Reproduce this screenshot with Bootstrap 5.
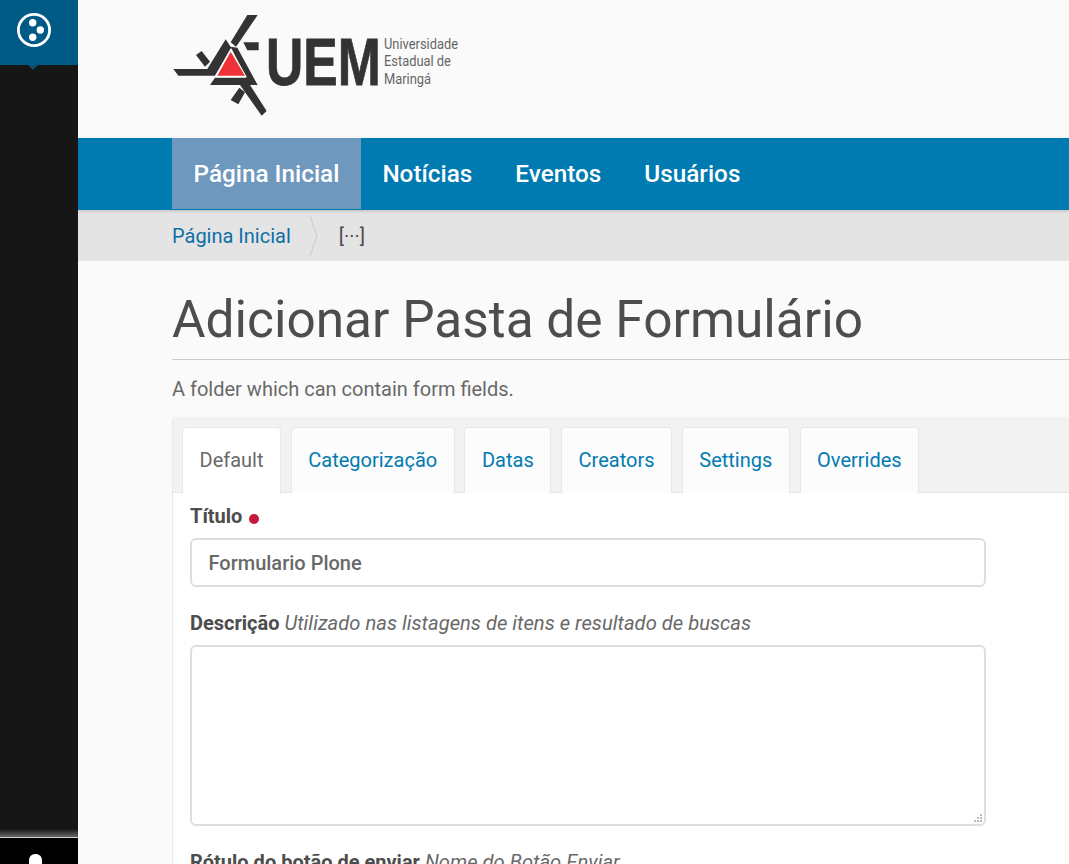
<!DOCTYPE html>
<html lang="pt-BR">
<head>
    <meta charset="UTF-8">
    <title>Adicionar Pasta de Formulário</title>
    <link href="https://cdn.jsdelivr.net/npm/bootstrap@5.3.3/dist/css/bootstrap.min.css" rel="stylesheet">
    <style>
        html, body { height: 100%; overflow: hidden; }
        body { font-family: Roboto, "Liberation Sans", sans-serif; background: #fafafa; color: #4d4d4d; }
        .app-shell { height: 864px; overflow: hidden; }
        .side-toolbar { width: 78px; flex: 0 0 78px; background: #161616; }
        .side-logo { height: 65px; background: #005a86; position: relative; padding: 13px 0 0 17px; }
        .side-logo::after { content: ""; position: absolute; left: 28px; top: 65px; border: 5px solid transparent; border-top: 5px solid #0b4f72; border-bottom: 0; }
        .side-fill { background: linear-gradient(to bottom, #161616 calc(100% - 8px), #666 100%); }
        .side-user { height: 27px; background: #000; border-top: 1px solid #cfcfcf; overflow: hidden; }
        .side-user span { display: block; width: 13px; height: 20px; margin: 16px 0 0 29px; background: #fff; border-radius: 6px; }
        .main-col { min-width: 0; overflow: hidden; }
        .site-head { height: 138px; padding: 13px 0 0 94px; }
        .site-nav { height: 72px; background: #007bb1; padding: 0 0 1px 94px; box-shadow: 0 1px 3px rgba(0, 0, 0, .17); position: relative; }
        .site-nav .nav-link { color: #fff; font-size: 24.3px; font-weight: 500; line-height: 72px; height: 71px; padding: 0 21.5px; }
        .site-nav .nav-link.active { background: #6f98bf; }
        .crumbs { height: 51px; background: #e5e4e5; padding-left: 94px; font-size: 20px; }
        .crumbs a { color: #0f6fa5; text-decoration: none; }
        .crumb-sep { margin: 0 20px 0 18px; }
        .crumb-rest { color: #4d4d4d; }
        .page-body { padding: 27px 0 0 94px; width: 991px; }
        .page-title { font-size: 51.4px; font-weight: 400; line-height: 63px; padding-bottom: 8px; margin: 0; border-bottom: 1px solid #ccc; color: #4d4d4d; }
        .page-desc { font-size: 20px; line-height: 24px; margin: 17px 0 16px; color: #696969; }
        .form-box { background: #fff; border-left: 1px solid #e9e9e9; border-radius: 4px 0 0 0; }
        .tab-strip { background: #f2f2f2; padding: 10px 0 0 9px; gap: 9.8px; border-bottom: 1px solid #e5e5e5; height: 76px; }
        .tab-strip .nav-link { height: 66px; padding: 0 16.5px; line-height: 65px; font-size: 20px; color: #007bb1; background: #fcfcfc; border: 1px solid #e8e8e8; border-bottom: 0; border-radius: 4px 4px 0 0; }
        .tab-strip .nav-link.active { color: #696969; background: #fff; height: 67px; }
        .form-pane { padding: 10px 0 0 17px; width: 796px; box-sizing: content-box; }
        .field-label { font-size: 20px; font-weight: 700; color: #4d4d4d; margin: 0; line-height: 27px; }
        .field-hint { font-size: 20.2px; font-weight: 400; font-style: italic; color: #696969; }
        .req-dot { display: inline-block; width: 10px; height: 10px; border-radius: 50%; background: #c4183c; margin-left: 2px; vertical-align: -1px; }
        .title-input { height: 49px; margin: 8px 0 23px; padding: 0 16.5px; font-size: 20px; font-weight: 500; color: #696969; border: 2px solid #dedede; border-radius: 6px; width: 796px; }
        .desc-input { height: 181px; margin: 8px 0 23px; border: 2px solid #dedede; border-radius: 6px; width: 796px; display: block; }
        .desc-input::-webkit-resizer { background: url("data:image/svg+xml,%3Csvg xmlns='http://www.w3.org/2000/svg' width='9' height='9' fill='%23bbb'%3E%3Crect x='7' y='0' width='2' height='2'/%3E%3Crect x='4' y='3' width='2' height='2'/%3E%3Crect x='7' y='3' width='2' height='2'/%3E%3Crect x='1' y='6' width='2' height='2'/%3E%3Crect x='4' y='6' width='2' height='2'/%3E%3Crect x='7' y='6' width='2' height='2'/%3E%3C/svg%3E") no-repeat right 2px bottom 1px; }
        .logo-word { font-family: "Liberation Sans", sans-serif; font-weight: 700; font-size: 67px; fill: #333; stroke: #333; stroke-width: .8px; }
        .logo-small { font-family: Roboto, sans-serif; font-size: 14px; fill: #666; }
    </style>
</head>
<body>
<div class="app-shell d-flex">

    <!-- Toolbar -->
    <div class="side-toolbar d-flex flex-column">
        <div class="side-logo">
            <svg width="34" height="34" viewBox="0 0 34 34">
                <circle cx="17" cy="17" r="15.6" fill="none" stroke="#fff" stroke-width="2.8"/>
                <circle cx="15.7" cy="9.7" r="3.7" fill="#fff"/>
                <circle cx="23.3" cy="17" r="3.7" fill="#fff"/>
                <circle cx="15.7" cy="24.3" r="3.7" fill="#fff"/>
            </svg>
        </div>
        <div class="side-fill flex-grow-1"></div>
        <div class="side-user"><span></span></div>
    </div>

    <div class="main-col flex-grow-1">
        <!-- Logo -->
        <div class="site-head">
            <svg width="290" height="108" viewBox="0 0 290 108">
                <g transform="translate(-12 -8) scale(.3333)" fill="#333">
                    <polygon points="262,30 293,30 240,108 228,125 212,112"/>
                    <polygon points="197,103 215,130 165,212 55,212 40,192 142,192"/>
                    <polygon points="212,125 232,128 293,240 150,240 165,218 258,218"/>
                    <polygon points="240,240 270,240 320,318 305,332"/>
                    <polygon points="108,150 125,138 150,170 135,185"/>
                    <polygon points="212,285 238,248 255,262 235,298"/>
                    <polygon points="250,112 296,112 296,136 262,136"/>
                    <polygon points="212,130 261,217 163,217" fill="#fff"/>
                    <polygon points="212,140 255,212 172,212" fill="#ee3237"/>
                </g>
                <g transform="translate(94 72) scale(.77 1)"><text class="logo-word">UEM</text></g>
                <g transform="translate(212 36) scale(.92 1)"><text class="logo-small">Universidade</text></g>
                <g transform="translate(212 53) scale(.92 1)"><text class="logo-small">Estadual de</text></g>
                <g transform="translate(212 71) scale(.92 1)"><text class="logo-small">Maringá</text></g>
            </svg>
        </div>

        <!-- Navigation -->
        <nav class="site-nav">
            <ul class="nav">
                <li class="nav-item"><a class="nav-link active" href="#">Página Inicial</a></li>
                <li class="nav-item"><a class="nav-link" href="#">Notícias</a></li>
                <li class="nav-item"><a class="nav-link" href="#">Eventos</a></li>
                <li class="nav-item"><a class="nav-link" href="#">Usuários</a></li>
            </ul>
        </nav>

        <!-- Breadcrumb -->
        <div class="crumbs d-flex align-items-center">
            <a href="#">Página Inicial</a>
            <svg class="crumb-sep" width="10" height="42" viewBox="0 0 10 42">
                <polyline points="1,1 8,21 1,41" fill="none" stroke="#cfcfcf" stroke-width="1.2"/>
            </svg>
            <span class="crumb-rest">[···]</span>
        </div>

        <!-- Form -->
        <div class="page-body">
            <h1 class="page-title">Adicionar Pasta de Formulário</h1>
            <p class="page-desc">A folder which can contain form fields.</p>
            <div class="form-box">
                <ul class="nav tab-strip">
                    <li class="nav-item"><a class="nav-link active" href="#">Default</a></li>
                    <li class="nav-item"><a class="nav-link" href="#">Categorização</a></li>
                    <li class="nav-item"><a class="nav-link" href="#">Datas</a></li>
                    <li class="nav-item"><a class="nav-link" href="#">Creators</a></li>
                    <li class="nav-item"><a class="nav-link" href="#">Settings</a></li>
                    <li class="nav-item"><a class="nav-link" href="#">Overrides</a></li>
                </ul>
                <div class="form-pane">
                    <label class="field-label form-label d-block" for="titulo">Título <span class="req-dot"></span></label>
                    <input id="titulo" type="text" class="form-control title-input" value="Formulario Plone">
                    <label class="field-label form-label d-block" for="descricao">Descrição <span class="field-hint">Utilizado nas listagens de itens e resultado de buscas</span></label>
                    <textarea id="descricao" class="form-control desc-input"></textarea>
                    <label class="field-label form-label d-block" for="botao">Rótulo do botão de enviar <span class="field-hint">Nome do Botão Enviar</span></label>
                </div>
            </div>
        </div>
    </div>
</div>
</body>
</html>
